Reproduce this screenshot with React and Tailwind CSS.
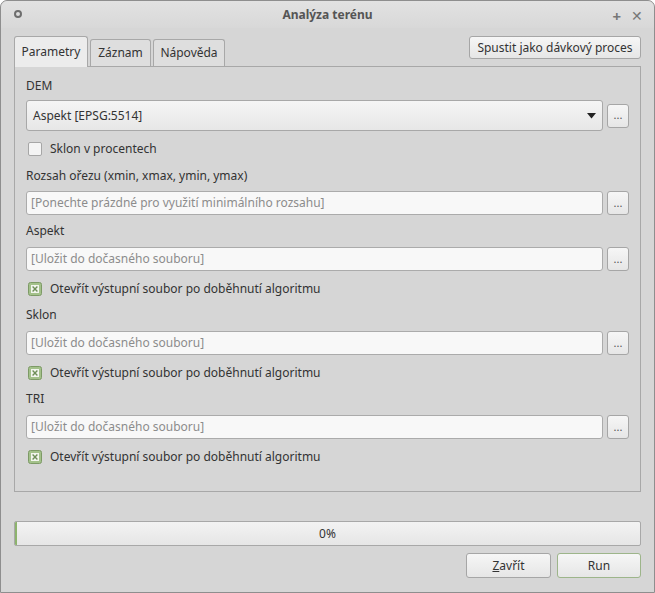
import React from 'react';

const font = { fontFamily: '"Noto Sans", "Open Sans", sans-serif' };

function DotsButton() {
  return (
    <button
      type="button"
      className="ml-[4px] flex h-[24px] w-[22px] shrink-0 items-center justify-center rounded-[3px] border border-[#a6a6a6] bg-gradient-to-b from-[#f6f6f6] to-[#e6e6e6] pb-[2px] text-[11px] leading-none text-[#555]"
    >
      ...
    </button>
  );
}

function PathInput({ placeholder }) {
  return (
    <div className="flex items-center">
      <div className="flex h-[24px] flex-1 items-center rounded-[3px] border border-[#ababab] bg-[#f8f8f8] px-[4px] text-[12px] text-[#8c8c8c]">
        {placeholder}
      </div>
      <DotsButton />
    </div>
  );
}

function Label({ children, className = '' }) {
  return <div className={`flex h-[20px] items-center text-[12px] text-[#333] ${className}`}>{children}</div>;
}

function Check({ checked, children, className = '' }) {
  return (
    <div className={`flex h-[20px] items-center gap-[8px] pl-[2px] text-[12px] text-[#333] ${className}`}>
      {checked ? (
        <svg width="14" height="14" viewBox="0 0 14 14">
          <rect x="0.5" y="0.5" width="13" height="13" rx="2" fill="#a3c18a" stroke="#7d9a66" />
          <rect x="3" y="3" width="8" height="8" fill="#f2f5ee" />
          <path d="M4.6 4.6 L9.4 9.4 M9.4 4.6 L4.6 9.4" stroke="#6f8f58" strokeWidth="1.4" />
        </svg>
      ) : (
        <div className="h-[14px] w-[14px] rounded-[2px] border border-[#a6a6a6] bg-[#f4f4f4]" />
      )}
      <span>{children}</span>
    </div>
  );
}

function OutputBlock({ label }) {
  return (
    <>
      <Label className="mt-[6px]">{label}</Label>
      <div className="mt-[6px]">
        <PathInput placeholder="[Uložit do dočasného souboru]" />
      </div>
      <Check checked className="mt-[8px]">Otevřít výstupní soubor po doběhnutí algoritmu</Check>
    </>
  );
}

export default function App() {
  return (
    <div style={font} className="h-[593px] w-[655px] overflow-hidden bg-white">
      <div className="flex h-full w-full flex-col rounded-t-[7px] border border-[#8e8e8e] bg-[#d6d6d6]">
        {/* title bar */}
        <div className="relative flex h-[27px] shrink-0 items-center justify-center rounded-t-[7px] bg-gradient-to-b from-[#e2e2e2] to-[#d8d8d8]">
          <div className="absolute left-[13px] top-[9px] h-[8px] w-[8px] rounded-full border-[2px] border-[#6e6e6e]" />
          <span className="text-[12px] font-bold text-[#555]">Analýza terénu</span>
          <span className="absolute right-[33px] top-[4px] text-[15px] font-bold text-[#777]">+</span>
          <span className="absolute right-[11px] top-[4px] text-[14px] text-[#777]">✕</span>
        </div>

        <div className="flex flex-1 flex-col px-[13px]">
          {/* tabs row */}
          <div className="mt-[8px] flex h-[30px] items-end justify-between">
            <div className="flex items-end">
              <div className="relative z-10 -mb-px flex h-[31px] w-[74px] items-center justify-center rounded-t-[3px] border border-b-0 border-[#a8a8a8] bg-[#ececec] text-[12px] text-[#333]">
                Parametry
              </div>
              <div className="ml-[2px] flex h-[27px] w-[61px] items-center justify-center rounded-t-[3px] border border-b-0 border-[#a8a8a8] bg-[#dedede] text-[12px] text-[#333]">
                Záznam
              </div>
              <div className="ml-[2px] flex h-[27px] w-[72px] items-center justify-center rounded-t-[3px] border border-b-0 border-[#a8a8a8] bg-[#dedede] text-[12px] text-[#333]">
                Nápověda
              </div>
            </div>
            <div className="mb-[7px] flex h-[23px] w-[172px] items-center justify-center rounded-[3px] border border-[#a6a6a6] bg-gradient-to-b from-[#f6f6f6] to-[#e6e6e6] text-[12px] text-[#333]">
              Spustit jako dávkový proces
            </div>
          </div>

          {/* panel */}
          <div className="flex h-[426px] flex-col border border-[#a8a8a8] px-[11px] pt-[9px]">
            <Label>DEM</Label>
            <div className="mt-[4px] flex items-center">
              <div className="flex h-[31px] flex-1 items-center justify-between rounded-[3px] border border-[#a8a8a8] bg-gradient-to-b from-[#f5f5f5] to-[#e7e7e7] pl-[6px] pr-[6px] text-[12px] text-[#333]">
                <span>Aspekt [EPSG:5514]</span>
                <svg width="9" height="6" viewBox="0 0 9 6">
                  <path d="M0 0 H9 L4.5 5.5 Z" fill="#222" />
                </svg>
              </div>
              <DotsButton />
            </div>
            <Check className="mt-[8px]">Sklon v procentech</Check>
            <Label className="mt-[7px]">Rozsah ořezu (xmin, xmax, ymin, ymax)</Label>
            <div className="mt-[5px]">
              <PathInput placeholder="[Ponechte prázdné pro využití minimálního rozsahu]" />
            </div>
            <OutputBlock label="Aspekt" />
            <OutputBlock label="Sklon" />
            <OutputBlock label="TRI" />
          </div>

          {/* progress */}
          <div className="relative mt-[29px] flex h-[25px] items-center justify-center overflow-hidden rounded-[2px] border border-[#a8a8a8] bg-gradient-to-b from-[#f3f3f3] to-[#e6e6e6]">
            <div className="absolute left-0 top-0 h-full w-[2px] bg-[#8db36d]" />
            <span className="text-[12px] text-[#333]">0%</span>
          </div>

          {/* buttons */}
          <div className="mt-[7px] flex justify-end gap-[6px]">
            <div className="flex h-[25px] w-[85px] items-center justify-center rounded-[3px] border border-[#a6a6a6] bg-gradient-to-b from-[#f6f6f6] to-[#e6e6e6] text-[12px] text-[#333]">
              <span><span className="underline">Z</span>avřít</span>
            </div>
            <div className="flex h-[25px] w-[84px] items-center justify-center rounded-[3px] border border-[#9db58a] bg-gradient-to-b from-[#f6f6f6] to-[#e6e6e6] text-[12px] text-[#333]">
              Run
            </div>
          </div>
        </div>
      </div>
    </div>
  );
}
